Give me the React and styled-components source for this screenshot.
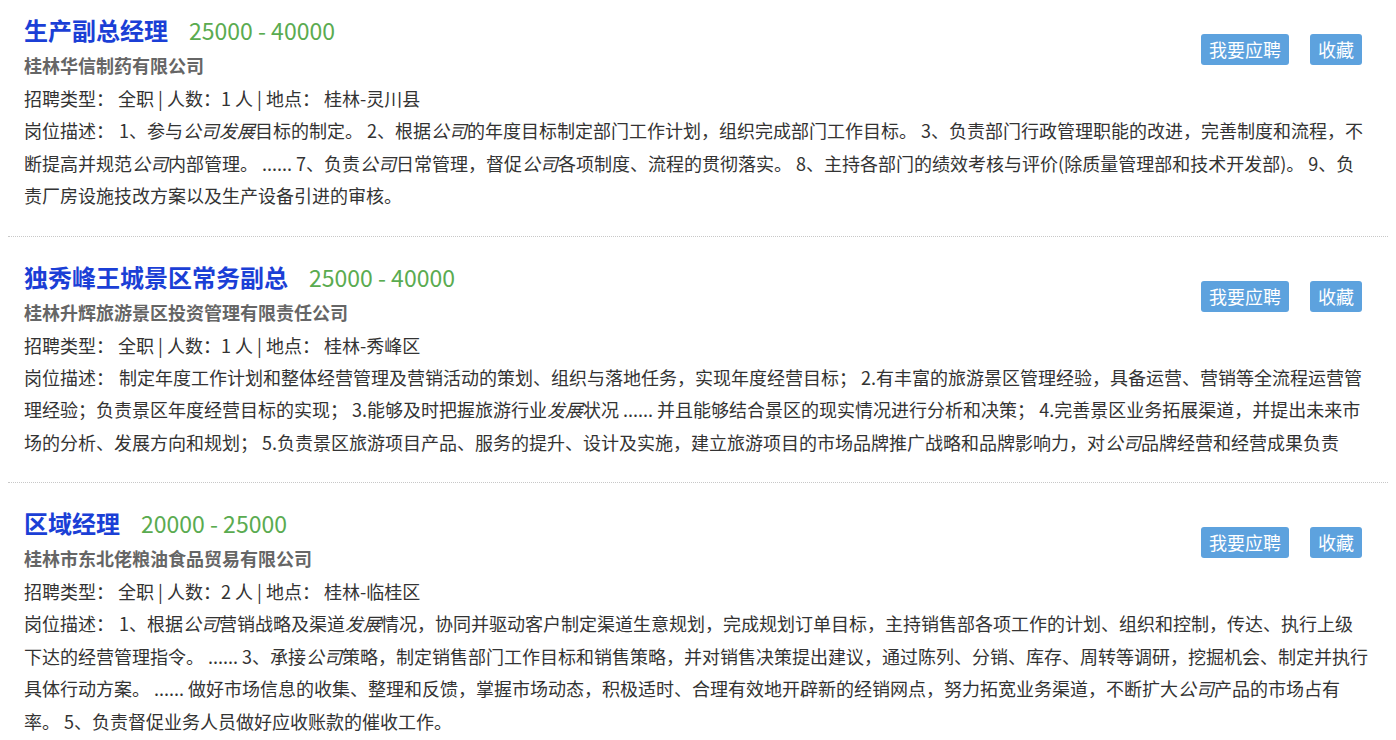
import React from "react";
import styled, { createGlobalStyle } from "styled-components";

const Global = createGlobalStyle`
  body {
    margin: 8px;
    background: #fff;
    font-family: "Noto Sans CJK SC", "Noto Sans", sans-serif;
    color: #333;
    text-spacing-trim: space-all;
  }
`;

const List = styled.div`
  display: flex;
  flex-direction: column;
`;

const Item = styled.div`
  padding: 23px 18px 24px 16px;
  border-bottom: 1px dotted #c8c8c8;
  &:first-child {
    padding-top: 5px;
  }
  &:last-child {
    border-bottom: none;
  }
`;

const Header = styled.div`
  display: flex;
  justify-content: space-between;
  align-items: flex-start;
`;

const Info = styled.div`
  display: flex;
  flex-direction: column;
`;

const TitleRow = styled.div`
  display: flex;
  align-items: baseline;
  gap: 21px;
  line-height: 34px;
`;

const Title = styled.span`
  font-size: 24px;
  font-weight: 700;
  color: #1b3fd6;
`;

const Salary = styled.span`
  font-size: 23px;
  color: #5aab50;
`;

const Company = styled.div`
  margin-top: 6px;
  font-size: 18px;
  line-height: 24px;
  font-weight: 700;
  color: #666;
`;

const Actions = styled.div`
  display: flex;
  gap: 21px;
  margin-top: 21px;
  margin-right: 8px;
`;

const Button = styled.button`
  border: none;
  background: #5da2de;
  color: #fff;
  font-family: inherit;
  font-size: 18px;
  line-height: 31px;
  height: 31px;
  padding: 0 8px;
  border-radius: 3px;
  cursor: pointer;
`;

const Meta = styled.div`
  margin-top: 5px;
  font-size: 18px;
  line-height: 32px;
  color: #333;
`;

const Desc = styled.div`
  font-size: 18px;
  line-height: 32.5px;
  color: #333;
  white-space: nowrap;
`;

const Label = styled.span`
  margin-right: 5px;
`;

const Em = styled.em`
  font-style: italic;
`;

const jobs = [
  {
    title: "生产副总经理",
    salary: "25000 - 40000",
    company: "桂林华信制药有限公司",
    people: "1",
    place: "桂林-灵川县",
    desc: [
      "1、参与*公司**发展*目标的制定。 2、根据*公司*的年度目标制定部门工作计划，组织完成部门工作目标。 3、负责部门行政管理职能的改进，完善制度和流程，不",
      "断提高并规范*公司*内部管理。 ...... 7、负责*公司*日常管理，督促*公司*各项制度、流程的贯彻落实。 8、主持各部门的绩效考核与评价(除质量管理部和技术开发部)。 9、负",
      "责厂房设施技改方案以及生产设备引进的审核。",
    ],
  },
  {
    title: "独秀峰王城景区常务副总",
    salary: "25000 - 40000",
    company: "桂林升辉旅游景区投资管理有限责任公司",
    people: "1",
    place: "桂林-秀峰区",
    desc: [
      "制定年度工作计划和整体经营管理及营销活动的策划、组织与落地任务，实现年度经营目标； 2.有丰富的旅游景区管理经验，具备运营、营销等全流程运营管",
      "理经验；负责景区年度经营目标的实现； 3.能够及时把握旅游行业*发展*状况 ...... 并且能够结合景区的现实情况进行分析和决策； 4.完善景区业务拓展渠道，并提出未来市",
      "场的分析、发展方向和规划； 5.负责景区旅游项目产品、服务的提升、设计及实施，建立旅游项目的市场品牌推广战略和品牌影响力，对*公司*品牌经营和经营成果负责",
    ],
  },
  {
    title: "区域经理",
    salary: "20000 - 25000",
    company: "桂林市东北佬粮油食品贸易有限公司",
    people: "2",
    place: "桂林-临桂区",
    desc: [
      "1、根据*公司*营销战略及渠道*发展*情况，协同并驱动客户制定渠道生意规划，完成规划订单目标，主持销售部各项工作的计划、组织和控制，传达、执行上级",
      "下达的经营管理指令。 ...... 3、承接*公司*策略，制定销售部门工作目标和销售策略，并对销售决策提出建议，通过陈列、分销、库存、周转等调研，挖掘机会、制定并执行",
      "具体行动方案。 ...... 做好市场信息的收集、整理和反馈，掌握市场动态，积极适时、合理有效地开辟新的经销网点，努力拓宽业务渠道，不断扩大*公司*产品的市场占有",
      "率。 5、负责督促业务人员做好应收账款的催收工作。",
    ],
  },
];

function renderLine(line) {
  return line
    .split(/(\*[^*]+\*)/)
    .filter(Boolean)
    .map((part, i) =>
      part.startsWith("*") ? (
        <Em key={i}>{part.slice(1, -1)}</Em>
      ) : (
        <React.Fragment key={i}>{part}</React.Fragment>
      )
    );
}

export default function App() {
  return (
    <>
      <Global />
      <List>
        {jobs.map((job) => (
          <Item key={job.title}>
            <Header>
              <Info>
                <TitleRow>
                  <Title>{job.title}</Title>
                  <Salary>{job.salary}</Salary>
                </TitleRow>
                <Company>{job.company}</Company>
              </Info>
              <Actions>
                <Button>我要应聘</Button>
                <Button>收藏</Button>
              </Actions>
            </Header>
            <Meta>
              招聘类型： 全职 | 人数：{job.people} 人 | 地点： {job.place}
            </Meta>
            <Desc>
              <Label>岗位描述：</Label>
              {job.desc.map((line, i) => (
                <React.Fragment key={i}>
                  {i > 0 && <br />}
                  {renderLine(line)}
                </React.Fragment>
              ))}
            </Desc>
          </Item>
        ))}
      </List>
    </>
  );
}
